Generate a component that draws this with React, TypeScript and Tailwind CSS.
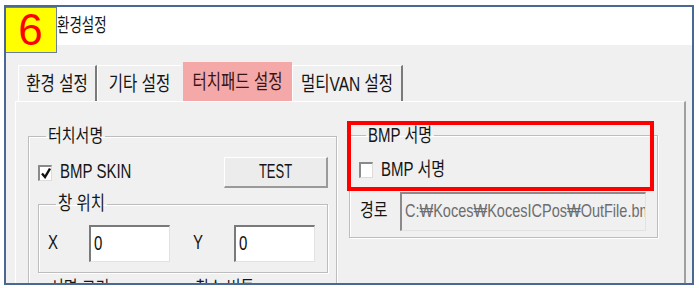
import * as React from 'react';

const sy = 'inline-block scale-y-[1.3]';

function Check({ checked }: { checked?: boolean }) {
  return (
    <span className="w-[14px] h-[16px] bg-white border-t-2 border-l-2 border-t-[#8a8a8a] border-l-[#8a8a8a] border-b border-r border-b-[#dcdcdc] border-r-[#dcdcdc] flex items-center justify-center">
      {checked && (
        <svg width="10" height="12" viewBox="0 0 10 12">
          <path d="M1 6.5 L4 10 L9 1.5" fill="none" stroke="#111" strokeWidth="2.4" />
        </svg>
      )}
    </span>
  );
}

function Field({ value, className }: { value: string; className: string }) {
  return (
    <div className={`${className} bg-white border-t-2 border-l-2 border-t-[#7a7a7a] border-l-[#7a7a7a] border-b border-r border-b-[#e2e2e2] border-r-[#e2e2e2] flex items-center pl-[3px] text-[15px] text-[#111]`}>
      <span className={sy}>{value}</span>
    </div>
  );
}

const groupClass = 'border border-[#bdbdbd] shadow-[inset_1px_1px_0_#ffffff,1px_1px_0_#ffffff]';

export default function App() {
  return (
    <div className="w-[699px] h-[288px] bg-white pt-[5px] pl-[4px] overflow-hidden relative font-['Liberation_Sans','Noto_Sans_CJK_KR',sans-serif] text-[#151515]">
      <div className="w-[690px] h-[280px] border-2 border-[#4a6894] flex flex-col overflow-hidden relative">
        {/* title */}
        <div className="h-[38px] shrink-0 bg-white flex items-center pl-[51px] text-[13.5px]">
          <span className="inline-block scale-y-[1.45]">환경설정</span>
        </div>
        <div className="absolute left-[-2px] top-0 w-[53px] h-[46px] bg-[#ffff00] border border-[#6b7f99] flex items-center justify-center text-[44px] leading-none text-[#ff0000] font-['Liberation_Sans',sans-serif]">
          6
        </div>

        {/* body */}
        <div className="flex-1 min-h-0 overflow-hidden bg-[#f0f0f0] pl-[9px] pt-[17px] flex flex-col">
          {/* tabs */}
          <div className="flex items-end h-[39px] shrink-0 pl-[3px] text-[15.5px]">
            <div className="w-[79px] h-[36px] border-t border-l border-white border-r-2 border-r-[#7a7a7a] flex items-center justify-center">
              <span className={sy}>환경 설정</span>
            </div>
            <div className="w-[84px] h-[36px] border-t border-l border-white flex items-center justify-center">
              <span className={sy}>기타 설정</span>
            </div>
            <div className="w-[109px] h-[39px] bg-[#f4a8a8] flex items-center justify-center text-[#3a1414] ml-[2px]">
              <span className={sy}>터치패드 설정</span>
            </div>
            <div className="w-[111px] h-[36px] border-t border-l border-white border-r-2 border-r-[#7a7a7a] flex items-center justify-center">
              <span className={sy}>멀티VAN 설정</span>
            </div>
          </div>

          {/* panel */}
          <div className="w-[671px] h-[200px] shrink-0 border-t border-l border-white border-r-2 border-r-[#a0a0a0] flex items-start pl-[12px] text-[15px]">
            {/* 터치서명 */}
            <fieldset className={`w-[308px] mt-[24px] pl-[9px] pr-[8px] ${groupClass}`}>
              <legend className="ml-[8px] px-[2px] h-[20px] leading-[20px]">
                <span className="inline-block scale-y-[1.2]">터치서명</span>
              </legend>
              <div className="flex items-center justify-between h-[31px] mt-[11px]">
                <div className="flex items-center gap-[8px]">
                  <Check checked />
                  <span className={sy}>BMP SKIN</span>
                </div>
                <div className="w-[104px] h-[31px] bg-[#ececec] border-t border-l border-white border-b-2 border-r-2 border-b-[#9a9a9a] border-r-[#9a9a9a] flex items-center justify-center text-[13px]">
                  <span className="inline-block scale-y-[1.5]">TEST</span>
                </div>
              </div>

              {/* 창 위치 */}
              <fieldset className={`w-[290px] mt-[6px] pl-[9px] pb-[10px] ${groupClass}`}>
                <legend className="ml-[8px] px-[2px] h-[20px] leading-[20px] text-[15.5px]">
                  <span className="inline-block scale-y-[1.25]">창 위치</span>
                </legend>
                <div className="flex items-center mt-[11px]">
                  <span className="w-[41px]"><span className={sy}>X</span></span>
                  <Field value="0" className="w-[81px] h-[37px]" />
                  <span className="w-[64px] pl-[23px]"><span className={sy}>Y</span></span>
                  <Field value="0" className="w-[81px] h-[37px]" />
                </div>
              </fieldset>

              <div className="flex mt-[5px] pl-[12px] h-[30px]">
                <span className="w-[145px]"><span className={sy}>서명 크기</span></span>
                <span><span className={sy}>취소 버튼</span></span>
              </div>
            </fieldset>

            {/* BMP 서명 */}
            <fieldset className={`w-[309px] ml-[12px] mt-[23px] pl-[9px] pb-[6px] ${groupClass}`}>
              <legend className="ml-[7px] px-[2px] h-[20px] leading-[20px]">
                <span className={sy}>BMP 서명</span>
              </legend>
              <div className="flex items-center gap-[8px] h-[20px] mt-[15px]">
                <Check />
                <span className={sy}>BMP 서명</span>
              </div>
              <div className="flex items-center mt-[12px]">
                <span className="w-[41px] pl-[1px]"><span className={sy}>경로</span></span>
                <div className="w-[246px] h-[39px] bg-[#f0f0f0] border-t-2 border-l-2 border-t-[#8a8a8a] border-l-[#8a8a8a] border-b border-r border-b-[#e2e2e2] border-r-[#e2e2e2] flex items-center pl-[3px] overflow-hidden whitespace-nowrap text-[#6d6d6d] text-[14.5px]">
                  <span className={sy}>C:₩Koces₩KocesICPos₩OutFile.bmp</span>
                </div>
              </div>
            </fieldset>
          </div>
        </div>
      </div>

      {/* highlight */}
      <div className="absolute left-[347px] top-[121px] w-[307px] h-[70px] border-4 border-[#ff0000]" />
    </div>
  );
}
